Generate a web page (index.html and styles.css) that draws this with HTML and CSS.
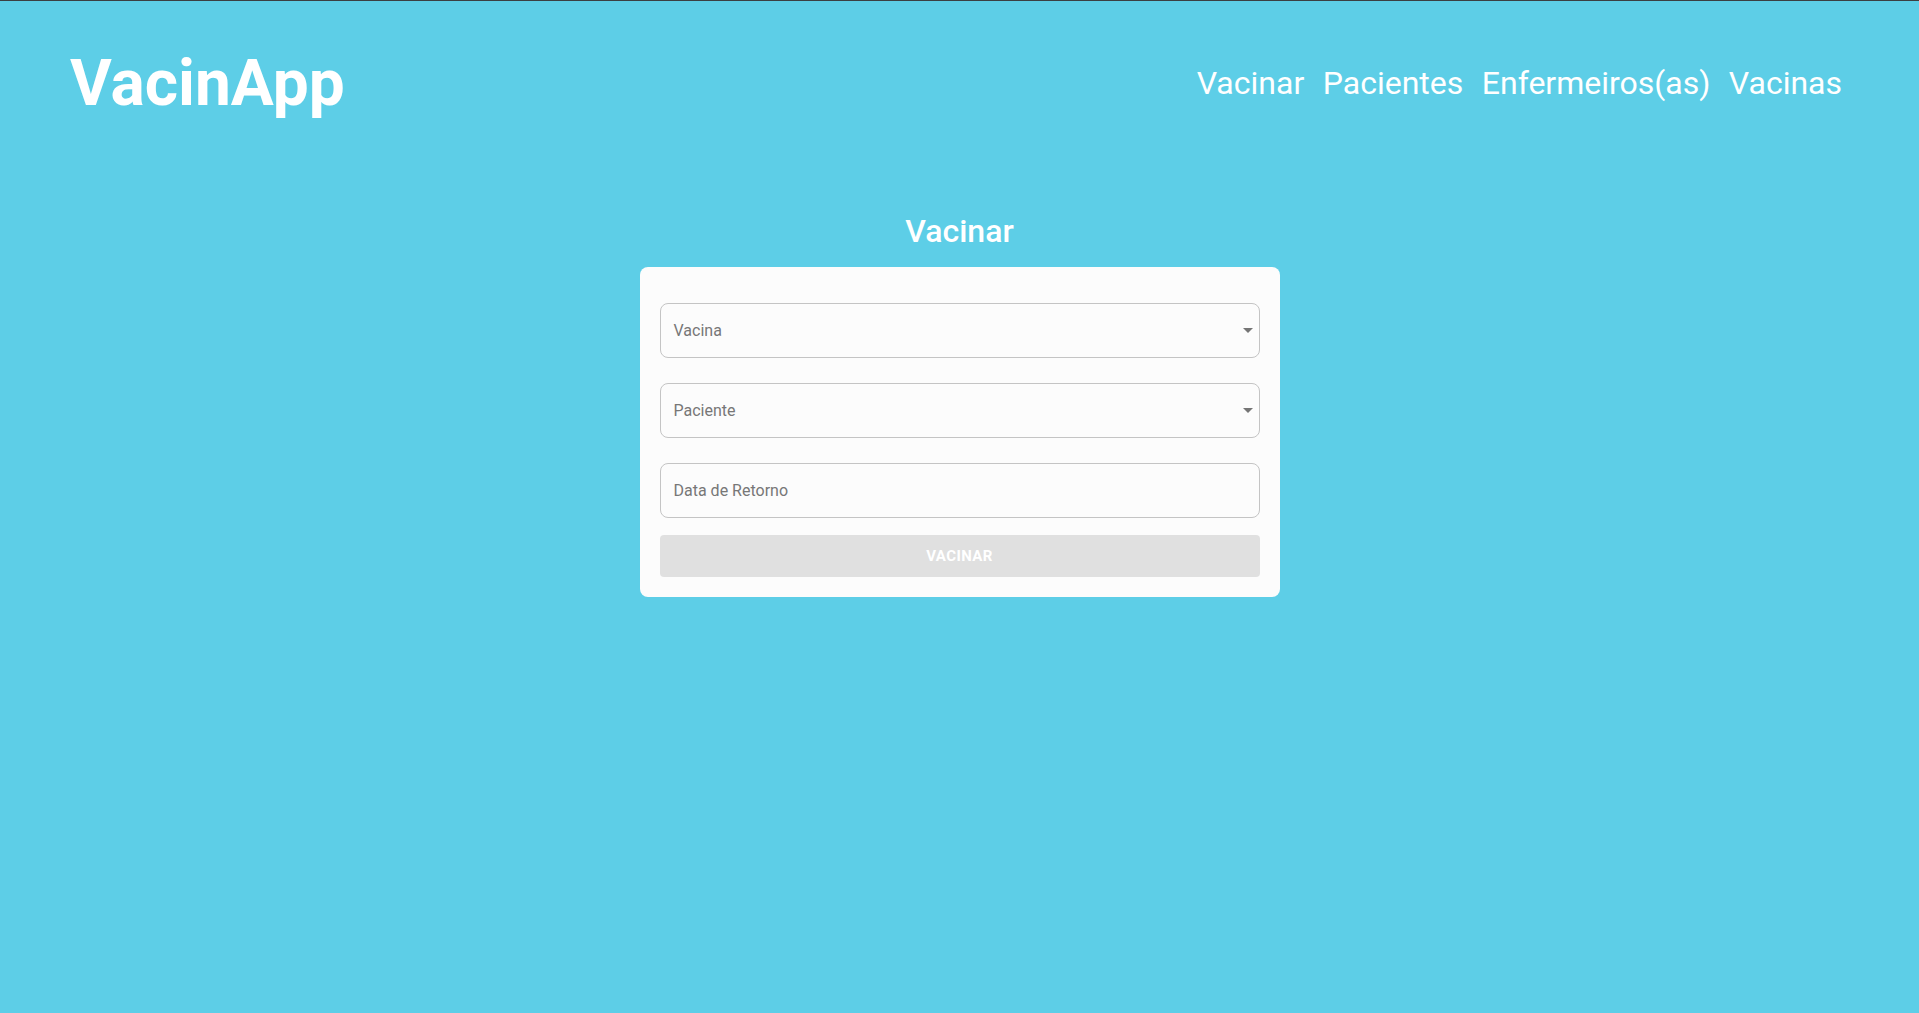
FILE: index.html
```html
<!DOCTYPE html>
<html lang="pt-BR">
<head>
<meta charset="utf-8">
<title>VacinApp</title>
<link rel="stylesheet" href="styles.css">
</head>
<body>
<div class="page">
  <header class="header">
    <h1 class="logo">VacinApp</h1>
    <nav class="nav">
      <a class="nav-link" href="#">Vacinar</a>
      <a class="nav-link" href="#">Pacientes</a>
      <a class="nav-link" href="#">Enfermeiros(as)</a>
      <a class="nav-link" href="#">Vacinas</a>
    </nav>
  </header>
  <main class="main">
    <h2 class="title">Vacinar</h2>
    <form class="card">
      <div class="field field-select">
        <span class="field-label">Vacina</span>
        <svg class="field-arrow" width="10" height="5" viewBox="0 0 10 5"><path d="M0 0l5 5 5-5z"/></svg>
      </div>
      <div class="field field-select">
        <span class="field-label">Paciente</span>
        <svg class="field-arrow" width="10" height="5" viewBox="0 0 10 5"><path d="M0 0l5 5 5-5z"/></svg>
      </div>
      <div class="field field-last">
        <span class="field-label">Data de Retorno</span>
      </div>
      <button type="button" class="btn" disabled>Vacinar</button>
    </form>
  </main>
</div>
</body>
</html>
```
FILE: styles.css
```css
html, body {
  margin: 0;
  padding: 0;
}
body {
  background: #5dcee7;
  font-family: Roboto, "Liberation Sans", Arial, sans-serif;
  min-height: 1013px;
  border-top: 1px solid #3b3f42;
  box-sizing: border-box;
}
.page {
  display: flex;
  flex-direction: column;
}
.header {
  display: flex;
  justify-content: space-between;
  align-items: center;
  padding: 45px 77px 0 70px;
}
.logo {
  margin: 0;
  font-size: 64px;
  font-weight: 700;
  color: #fff;
  line-height: normal;
}
.nav {
  display: flex;
  gap: 18.5px;
  padding-bottom: 2px;
}
.nav-link {
  color: #fff;
  text-decoration: none;
  font-size: 32px;
  font-weight: 400;
  line-height: normal;
}
.main {
  display: flex;
  flex-direction: column;
  align-items: center;
  padding-top: 91px;
}
.title {
  margin: 0 0 17px;
  color: #fff;
  font-size: 32px;
  font-weight: 500;
  line-height: normal;
}
.card {
  width: 640px;
  box-sizing: border-box;
  background: #fcfcfc;
  border-radius: 8px;
  padding: 36px 20px 20px;
  display: flex;
  flex-direction: column;
}
.field {
  height: 55px;
  box-sizing: border-box;
  border: 1px solid #c4c4c4;
  border-radius: 8px;
  padding: 0 13px;
  display: flex;
  align-items: center;
  justify-content: space-between;
  margin-bottom: 25px;
}
.field-last {
  margin-bottom: 17px;
}
.field-label {
  font-size: 16px;
  color: #777;
}
.field-arrow {
  fill: #757575;
  margin-right: -7px;
}
.btn {
  height: 42px;
  border: none;
  border-radius: 4px;
  background: #e0e0e0;
  color: #fff;
  font-family: Roboto, "Liberation Sans", Arial, sans-serif;
  font-size: 15px;
  font-weight: 700;
  letter-spacing: 0.4px;
  text-transform: uppercase;
  padding: 0;
}
```
